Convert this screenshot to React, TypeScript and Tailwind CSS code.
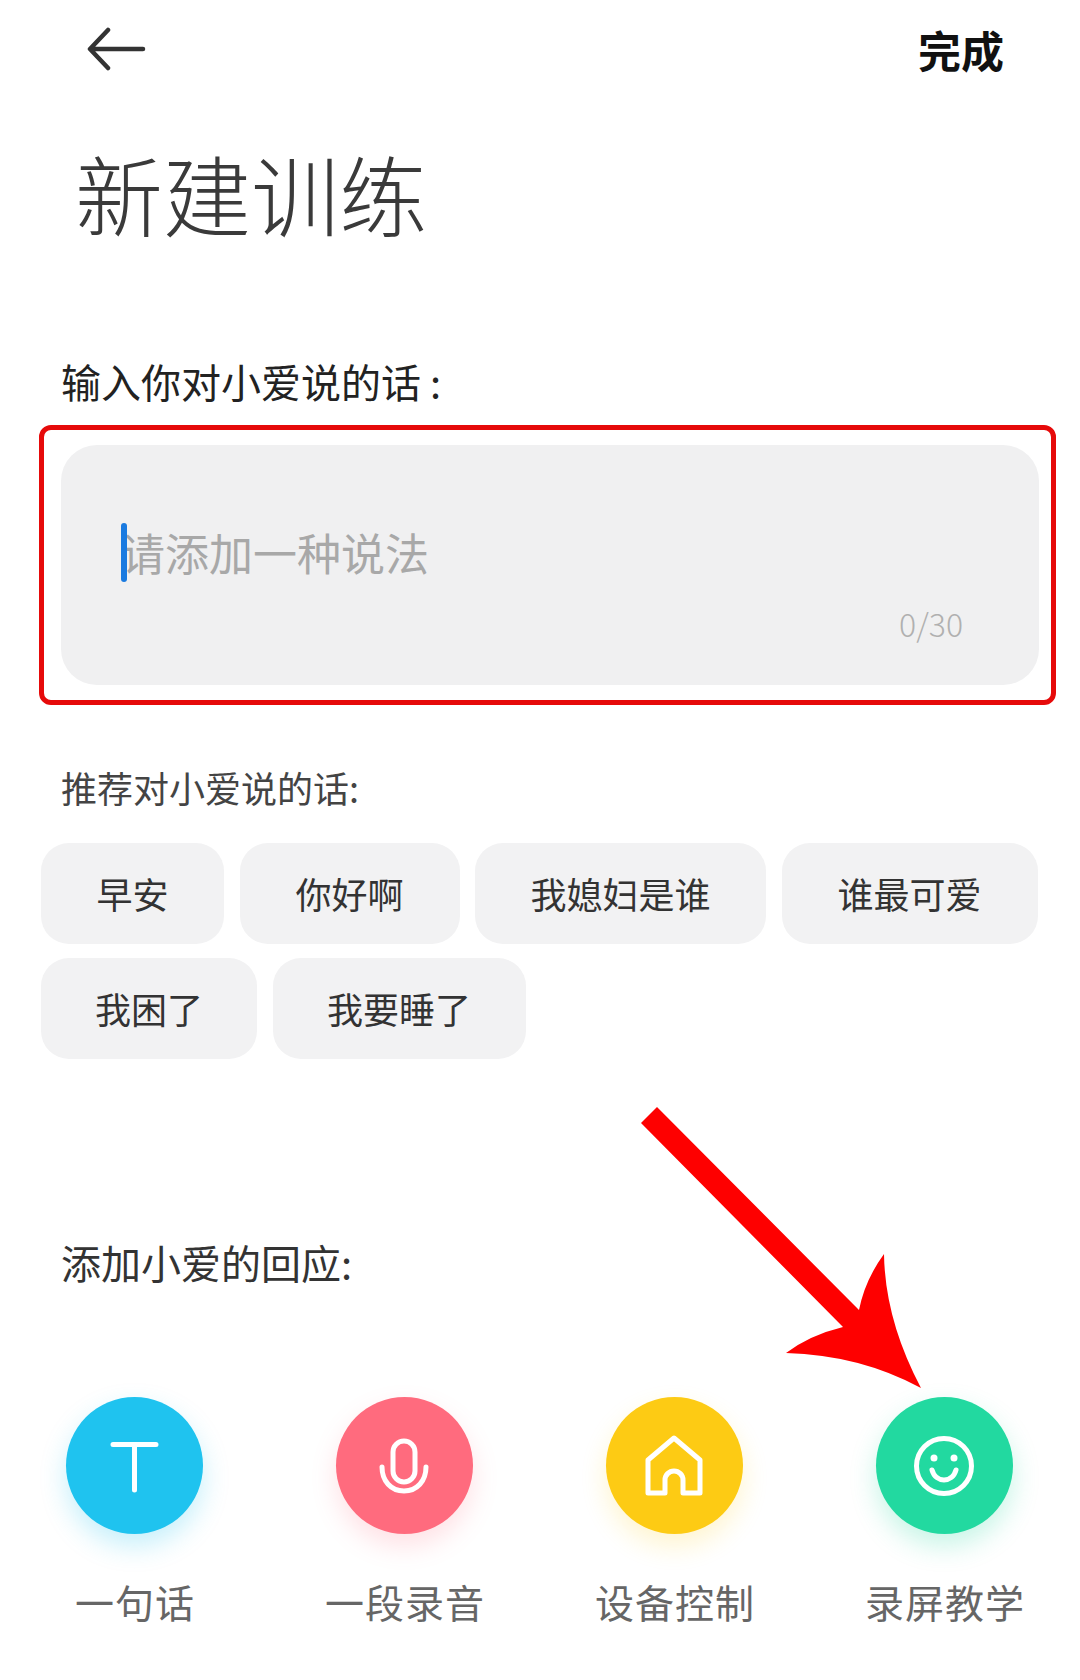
import React from "react";

const chipRows = [
  [
    { label: "早安", width: "w-[183px]" },
    { label: "你好啊", width: "w-[220px]" },
    { label: "我媳妇是谁", width: "w-[291px]" },
    { label: "谁最可爱", width: "w-[256px]" },
  ],
  [
    { label: "我困了", width: "w-[216px]" },
    { label: "我要睡了", width: "w-[253px]" },
  ],
];

const TextIcon = () => (
  <svg width="60" height="60" viewBox="0 0 60 60" fill="none" stroke="#fff" strokeWidth="5" strokeLinecap="round">
    <path d="M9 8.5H52M30.5 8.5V54" />
  </svg>
);

const MicIcon = () => (
  <svg width="60" height="60" viewBox="0 0 60 60" fill="none" stroke="#fff" strokeWidth="5" strokeLinecap="round">
    <rect x="19" y="5" width="22" height="41" rx="11" />
    <path d="M8 31C8 45 17 55 30 55S52 45 52 31" />
  </svg>
);

const HomeIcon = () => (
  <svg width="64" height="64" viewBox="0 0 64 64" fill="none" stroke="#fff" strokeWidth="5" strokeLinejoin="round" strokeLinecap="round">
    <path d="M6 26L32 4L58 26V59H41V46C41 41 37 37 32 37S23 41 23 46V59H6Z" />
  </svg>
);

const SmileIcon = () => (
  <svg width="64" height="64" viewBox="0 0 64 64" fill="none" stroke="#fff" strokeWidth="5" strokeLinecap="round">
    <circle cx="32" cy="32" r="27.5" />
    <path d="M20 36C22 43 27 46 32 46S42 43 44 36" />
    <circle cx="22" cy="24" r="3.5" fill="#fff" stroke="none" />
    <circle cx="42" cy="24" r="3.5" fill="#fff" stroke="none" />
  </svg>
);

const actions = [
  { label: "一句话", color: "bg-[#1fc3ef] shadow-[0_12px_26px_rgba(31,195,239,0.25)]", icon: <TextIcon /> },
  { label: "一段录音", color: "bg-[#ff6b7e] shadow-[0_12px_26px_rgba(255,107,126,0.2)]", icon: <MicIcon /> },
  { label: "设备控制", color: "bg-[#fdcb14] shadow-[0_12px_26px_rgba(253,203,20,0.2)]", icon: <HomeIcon /> },
  { label: "录屏教学", color: "bg-[#22d9a0] shadow-[0_12px_26px_rgba(34,217,160,0.25)]", icon: <SmileIcon /> },
];

export default function App() {
  return (
    <div className="relative w-[1080px] h-[1680px] overflow-hidden bg-white font-['Noto_Sans_CJK_SC',sans-serif]">
      <div className="flex h-[98px] items-center justify-between pl-[86px] pr-[76px]">
        <svg width="60" height="44" viewBox="0 0 60 44" fill="none" stroke="#333" strokeWidth="4.5" strokeLinecap="round" strokeLinejoin="round">
          <path d="M57 22H6M22 3L4 22L22 41" />
        </svg>
        <span className="text-[43px] leading-[50px] font-bold text-[#111]">完成</span>
      </div>

      <h1 className="mt-[44px] pl-[75px] text-[88px] leading-[100px] font-light text-[#3a3a3a]">新建训练</h1>

      <p className="mt-[114px] pl-[61px] text-[40px] leading-[50px] text-[#222]">输入你对小爱说的话 :</p>

      <div className="mt-[19px] ml-[39px] h-[280px] w-[1017px] rounded-[12px] border-[5px] border-[#e60a0a] pl-[17px] pt-[15px]">
        <div className="relative h-[240px] w-[978px] rounded-[36px] bg-[#f0f0f1]">
          <div className="flex items-center pl-[60px] pt-[78px]">
            <div className="relative z-10 h-[59px] w-[6px] rounded-full bg-[#1a7ae0]" />
            <span className="ml-[-6px] text-[44px] leading-[59px] text-[#a8a8a8]">请添加一种说法</span>
          </div>
          <span className="absolute right-[76px] bottom-[44px] text-[32px] leading-[36px] font-light text-[#b0b0b0]">0/30</span>
        </div>
      </div>

      <p className="mt-[57px] pl-[61px] text-[36px] leading-[50px] text-[#444]">推荐对小爱说的话:</p>

      <div className="mt-[31px] flex flex-col gap-[14px] pl-[41px]">
        {chipRows.map((row, i) => (
          <div key={i} className="flex gap-[15.5px]">
            {row.map((chip) => (
              <div
                key={chip.label}
                className={`flex h-[101px] items-center justify-center rounded-[28px] bg-[#f2f2f3] pb-[2px] text-[36px] text-[#333] ${chip.width}`}
              >
                {chip.label}
              </div>
            ))}
          </div>
        ))}
      </div>

      <p className="mt-[178px] pl-[61px] text-[40px] leading-[50px] text-[#333]">添加小爱的回应:</p>

      <div className="mt-[110px] ml-[-1px] grid w-[1080px] grid-cols-4">
        {actions.map((a) => (
          <div key={a.label} className="flex flex-col items-center">
            <div className={`flex h-[137px] w-[137px] items-center justify-center rounded-full ${a.color}`}>{a.icon}</div>
            <span className="mt-[42px] pl-[2px] text-[39px] leading-[50px] tracking-[1px] text-[#666]">{a.label}</span>
          </div>
        ))}
      </div>

      {/* annotation arrow */}
      <svg className="absolute left-0 top-0" width="1080" height="1680" viewBox="0 0 1080 1680">
        <path
          d="M641 1123L657 1107L859 1310Q865 1280 884 1254Q885 1320 921 1388Q860 1355 786 1353Q810 1335 843 1327Z"
          fill="#fe0000"
        />
      </svg>
    </div>
  );
}
